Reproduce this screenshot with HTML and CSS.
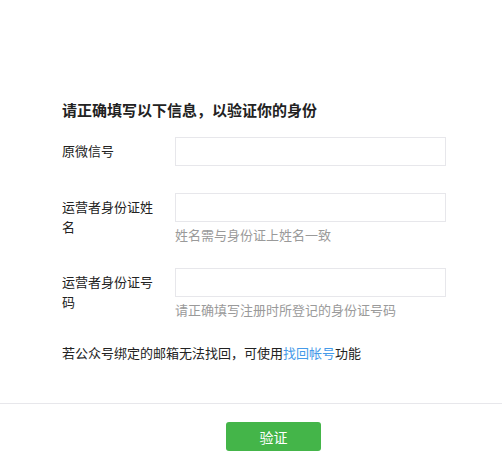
FILE: index.html
```html
<!DOCTYPE html>
<html lang="zh-CN">
<head>
<meta charset="utf-8">
<title>验证身份</title>
<link rel="stylesheet" href="styles.css">
</head>
<body>
<div class="dialog">
  <div class="content">
    <h2 class="title">请正确填写以下信息，以验证你的身份</h2>
    <div class="row">
      <label class="label">原微信号</label>
      <div class="field">
        <input class="input" type="text">
      </div>
    </div>
    <div class="row">
      <label class="label">运营者身份证姓名</label>
      <div class="field">
        <input class="input" type="text">
        <p class="note">姓名需与身份证上姓名一致</p>
      </div>
    </div>
    <div class="row">
      <label class="label">运营者身份证号码</label>
      <div class="field">
        <input class="input" type="text">
        <p class="note">请正确填写注册时所登记的身份证号码</p>
      </div>
    </div>
    <p class="tip">若公众号绑定的邮箱无法找回，可使用<a class="link" href="#">找回帐号</a>功能</p>
  </div>
  <div class="footer">
    <button class="btn" type="button">验证</button>
  </div>
</div>
</body>
</html>
```
FILE: styles.css
```css
html, body {
  margin: 0;
  padding: 0;
  background: #fff;
}
body {
  font-family: "Noto Sans CJK SC", "Liberation Sans", sans-serif;
  font-size: 13px;
  line-height: 20px;
  color: #222;
}
.dialog {
  width: 502px;
  height: 463px;
  overflow: hidden;
}
.content {
  padding: 100px 0 40px 62px;
}
.title {
  margin: 0 0 17px;
  font-size: 15px;
  font-weight: bold;
  line-height: 20px;
  color: #222;
}
.row {
  display: flex;
  align-items: flex-start;
  margin-bottom: 27px;
}
.label {
  width: 100px;
  margin-right: 13px;
  padding-top: 4px;
  line-height: 20px;
  color: #222;
}
.field {
  width: 271px;
}
.input {
  display: block;
  width: 271px;
  height: 29px;
  box-sizing: border-box;
  border: 1px solid #e7e7eb;
  margin: 0;
  padding: 0 8px;
  outline: none;
  background: #fff;
}
.note {
  margin: 3px 0 -4px;
  line-height: 20px;
  color: #9a9a9a;
}
.tip {
  margin: 0;
  line-height: 20px;
  color: #222;
}
.link {
  color: #459ae9;
  text-decoration: none;
}
.footer {
  border-top: 1px solid #e7e7eb;
  padding-top: 18px;
  padding-left: 226px;
}
.btn {
  display: block;
  width: 95px;
  height: 29px;
  border: 0;
  border-radius: 3px;
  background: #44b549;
  color: #fff;
  font-family: "Noto Sans CJK SC", "Liberation Sans", sans-serif;
  font-size: 14px;
  padding: 0;
  cursor: pointer;
}
```
